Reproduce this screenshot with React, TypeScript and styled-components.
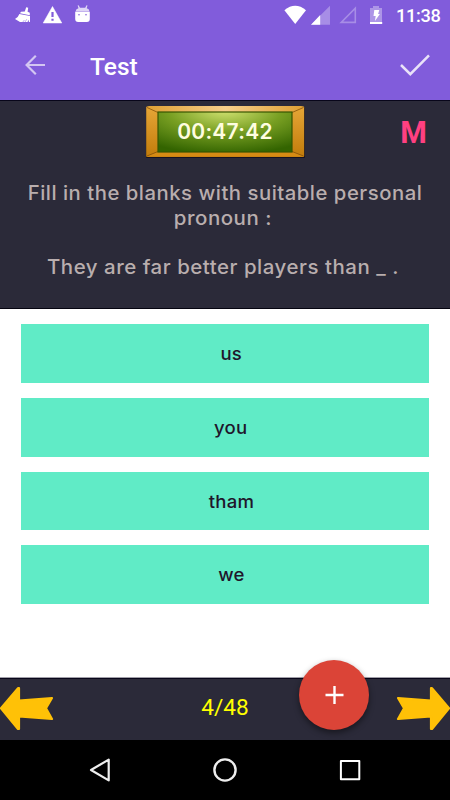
import React from "react";
import styled, { createGlobalStyle } from "styled-components";

const GlobalStyle = createGlobalStyle`
  * { box-sizing: border-box; }
  body { margin: 0; background: #fff; }
`;

const Screen = styled.div`
  width: 450px;
  height: 800px;
  display: flex;
  flex-direction: column;
  overflow: hidden;
  background: #fff;
  font-family: Roboto, sans-serif;
`;

const Header = styled.header`
  height: 101px;
  flex: none;
  background: #815cdb;
  border-bottom: 1px solid #08061a;
  color: #fff;
`;

const StatusBar = styled.div`
  height: 32px;
  display: flex;
  justify-content: space-between;
  padding-right: 10px;
`;

const Clock = styled.span`
  width: 44px;
  font-size: 18.2px;
  font-weight: 500;
  line-height: 32px;
  letter-spacing: -0.3px;
`;

const StatusRight = styled.div`
  display: flex;
`;

const Toolbar = styled.div`
  height: 67px;
  display: flex;
  align-items: center;
`;

const Title = styled.h1`
  flex: 1;
  margin: 0;
  padding: 2px 0 0 15px;
  font-size: 24.5px;
  font-weight: 500;
  line-height: 67px;
`;

const Question = styled.section`
  height: 208px;
  flex: none;
  background: #2b2a39;
  border-bottom: 1px solid #050410;
  display: flex;
  flex-direction: column;
`;

const TimerRow = styled.div`
  height: 63px;
  display: grid;
  grid-template-columns: 1fr 160px 1fr;
  padding-top: 4px;
`;

const Timer = styled.div`
  position: relative;
  width: 160px;
  height: 54px;
`;

const TimerText = styled.span`
  position: absolute;
  inset: 0;
  text-align: center;
  font: 600 21px/53px Inter, sans-serif;
  letter-spacing: 0.25px;
  color: #fffde0;
`;

const Mark = styled.span`
  justify-self: end;
  padding-right: 23px;
  font-size: 32px;
  line-height: 54px;
  font-weight: 700;
  color: #ff4081;
  transform: scaleX(0.95);
`;

const Line = styled.p<{ $stretch?: number; $shift?: number }>`
  margin: 0;
  height: 24.5px;
  text-align: center;
  white-space: pre;
  font: 500 19.5px/24.5px Inter, sans-serif;
  letter-spacing: 0.5px;
  padding-right: ${(p) => p.$shift ?? 0}px;
  transform: scaleX(${(p) => p.$stretch ?? 1});
  color: #b9aeae;
`;

const Prompt = styled.div`
  padding-top: 17px;
`;

const Answers = styled.main`
  flex: 1;
  display: flex;
  flex-direction: column;
  gap: 15.1px;
  padding: 15.4px 21px 0;
`;

const Answer = styled.button`
  height: 58.6px;
  flex: none;
  border: 0;
  padding: 0 0 0 12px;
  background: #60ebc6;
  color: #20162b;
  font: 500 17.5px/59.5px Inter, sans-serif;
  letter-spacing: 0.2px;
`;

const AnswerText = styled.span`
  display: inline-block;
  transform: scaleX(1.06);
`;

const Footer = styled.footer`
  position: relative;
  height: 63px;
  flex: none;
  display: flex;
  justify-content: space-between;
  background: #2b2a39;
  border-top: 1px solid #a19fa8;
  box-shadow: inset 0 1px #08061a;
`;

const Counter = styled.span`
  font-size: 22.6px;
  line-height: 59px;
  color: #ffff00;
`;

const Fab = styled.button`
  position: absolute;
  left: 298.5px;
  top: -18px;
  width: 70px;
  height: 70px;
  border: 0;
  padding: 0;
  border-radius: 50%;
  background: #db4437;
  box-shadow: 0 3px 6px rgba(0, 0, 0, 0.45);
`;

const NavBar = styled.nav`
  height: 60px;
  flex: none;
  background: #000;
  display: flex;
  justify-content: center;
  align-items: center;
  gap: 85px;
`;

const answers = ["us", "you", "tham", "we"];

const Arrow = ({ flip = false }: { flip?: boolean }) => (
  <svg width="54" height="62" viewBox="0 0 54 62">
    <path
      transform={flip ? "translate(54 0) scale(-1 1)" : undefined}
      d="M1 30.3 18 10.2 19 10.2V22.6L52 20 46 30.3 52 41 19 38.5V51H18Z"
      fill="#ffc107"
      stroke="#ffc107"
      strokeWidth="2.2"
      strokeLinejoin="round"
    />
  </svg>
);

const Notifications = () => (
  <svg width="100" height="32" viewBox="0 0 100 32" fill="#fff">
    <path d="M26.2 7.2 28.2 7.8 27.6 11.8 29.8 12.8V15.2L20 13.2 21 11.8 24.8 11.6Z" />
    <path d="M19.4 14 30 16V22H28.8L29 19.8 27.4 22H20L15 18.9Q18 17.8 19.4 14Z" />
    <path d="M26.8 19.2 25 22M24.4 20 22.8 22" stroke="#815cdb" strokeWidth=".5" />
    <path d="M52.5 6.5 61.8 23H43.2Z" stroke="#fff" strokeWidth=".5" strokeLinejoin="round" />
    <path d="M51.4 12h2.2v5h-2.2ZM51.4 18.7h2.2v2h-2.2Z" fill="#815cdb" />
    <path d="M75.2 11.7h14.6V19q0 3-3 3h-8.6q-3 0-3-3Z" />
    <path d="M75.5 11.5q.5-2.8 3-3.2L77.6 5.6l1-.3L80 7.8h5.2l1.3-2.5 1 .3-.8 2.7q2.6.6 2.8 3.2Z" opacity=".75" />
    <circle cx="79" cy="14.8" r=".8" fill="#815cdb" />
    <circle cx="86" cy="14.8" r=".8" fill="#815cdb" />
  </svg>
);

const Signals = () => (
  <svg width="112" height="32" viewBox="285 0 112 32" fill="#fff">
    <path d="M285.4 10.2Q296.2 1.5 307 10.2L296.2 24Z" />
    <path d="M331 5.8V24.8H312Z" opacity=".3" />
    <path d="M321.2 15V24.8H312Z" />
    <path d="M356.3 8.2V22.4H342.2Z" fill="none" stroke="#fff" strokeWidth="1.6" opacity=".3" />
    <path d="M374 6h6v2h3V22H371V8h3Z" opacity=".35" />
    <path d="M371 22h12.2v2H371Z" />
    <path d="M375.3 10h5l-1.2 4h1.8l-5 7 .8-5h-2.2Z" />
  </svg>
);

export default function App() {
  return (
    <Screen>
      <GlobalStyle />
      <Header>
        <StatusBar>
          <Notifications />
          <StatusRight>
            <Signals />
            <Clock>11:38</Clock>
          </StatusRight>
        </StatusBar>
        <Toolbar>
          <svg width="75" height="67" viewBox="0 0 75 67" fill="none" stroke="#d3c6f2" strokeWidth="2.2">
            <path d="M45 33H27M35.8 23.8 26.6 33l9.2 9.2" />
          </svg>
          <Title>Test</Title>
          <svg width="60" height="67" viewBox="390 32 60 67" fill="none" stroke="#e9e2f8" strokeWidth="2.5">
            <path d="M401 65 410.3 74.2 429 55.3" />
          </svg>
        </Toolbar>
      </Header>

      <Question>
        <TimerRow>
          <span />
          <Timer>
            <svg width="160" height="54" viewBox="145 105 160 54">
              <defs>
                <radialGradient id="board" cx=".5" cy="0" r=".85" gradientTransform="translate(0 -.05) scale(1 1.3)">
                  <stop offset="0" stopColor="#d2e372" />
                  <stop offset=".5" stopColor="#789f22" />
                  <stop offset="1" stopColor="#336400" />
                </radialGradient>
                <linearGradient id="top">
                  <stop offset="0" stopColor="#dfa033" />
                  <stop offset=".5" stopColor="#f6ce8b" />
                  <stop offset="1" stopColor="#dfa033" />
                </linearGradient>
                <linearGradient id="side" x2="0" y2="1">
                  <stop offset="0" stopColor="#e6a637" />
                  <stop offset="1" stopColor="#c27c0b" />
                </linearGradient>
              </defs>
              <rect x="146" y="107" width="159" height="51" rx="1" fill="#161322" />
              <rect x="146.2" y="106.5" width="158" height="50.5" rx="1" fill="url(#side)" />
              <path d="M147 107 149 106H301L304 107 292 112.5H158Z" fill="url(#top)" />
              <path d="M146.5 156.5 158 151.5H292L304 156.5Z" fill="#d68b14" />
              <path d="M147 107.5 158 112.5M303.5 107.5 292 112.5M147 156 158 151.5M303.5 156 292 151.5" stroke="#855008" strokeWidth=".8" />
              <rect x="158" y="112" width="134" height="40" fill="url(#board)" stroke="#385600" strokeWidth="1.2" />
            </svg>
            <TimerText>00:47:42</TimerText>
          </Timer>
          <Mark>M</Mark>
        </TimerRow>
        <Prompt>
          <Line $stretch={1.04}>Fill in the blanks with suitable personal</Line>
          <Line $stretch={1.05} $shift={4}>pronoun :</Line>
          <Line> </Line>
          <Line $stretch={1.048} $shift={4}>They are far better players than _ .</Line>
        </Prompt>
      </Question>

      <Answers>
        {answers.map((text) => (
          <Answer key={text}>
            <AnswerText>{text}</AnswerText>
          </Answer>
        ))}
      </Answers>

      <Footer>
        <Arrow />
        <Counter>4/48</Counter>
        <Arrow flip />
        <Fab aria-label="Add">
          <svg width="70" height="70" viewBox="0 0 70 70" stroke="#fff" strokeWidth="2.4">
            <path d="M26.5 35h18M35.5 26v18" />
          </svg>
        </Fab>
      </Footer>

      <NavBar>
        <svg width="40" height="40" viewBox="0 0 40 40" fill="none" stroke="#eee" strokeWidth="2.2" strokeLinejoin="round">
          <path d="M28.7 9.6V30.4L11 20Z" />
        </svg>
        <svg width="40" height="40" viewBox="0 0 40 40" fill="none" stroke="#eee" strokeWidth="2.4">
          <circle cx="20" cy="20" r="10.6" />
        </svg>
        <svg width="40" height="40" viewBox="0 0 40 40" fill="none" stroke="#fff" strokeWidth="2" strokeLinejoin="round">
          <rect x="10.9" y="10.9" width="18.4" height="18.4" />
        </svg>
      </NavBar>
    </Screen>
  );
}
